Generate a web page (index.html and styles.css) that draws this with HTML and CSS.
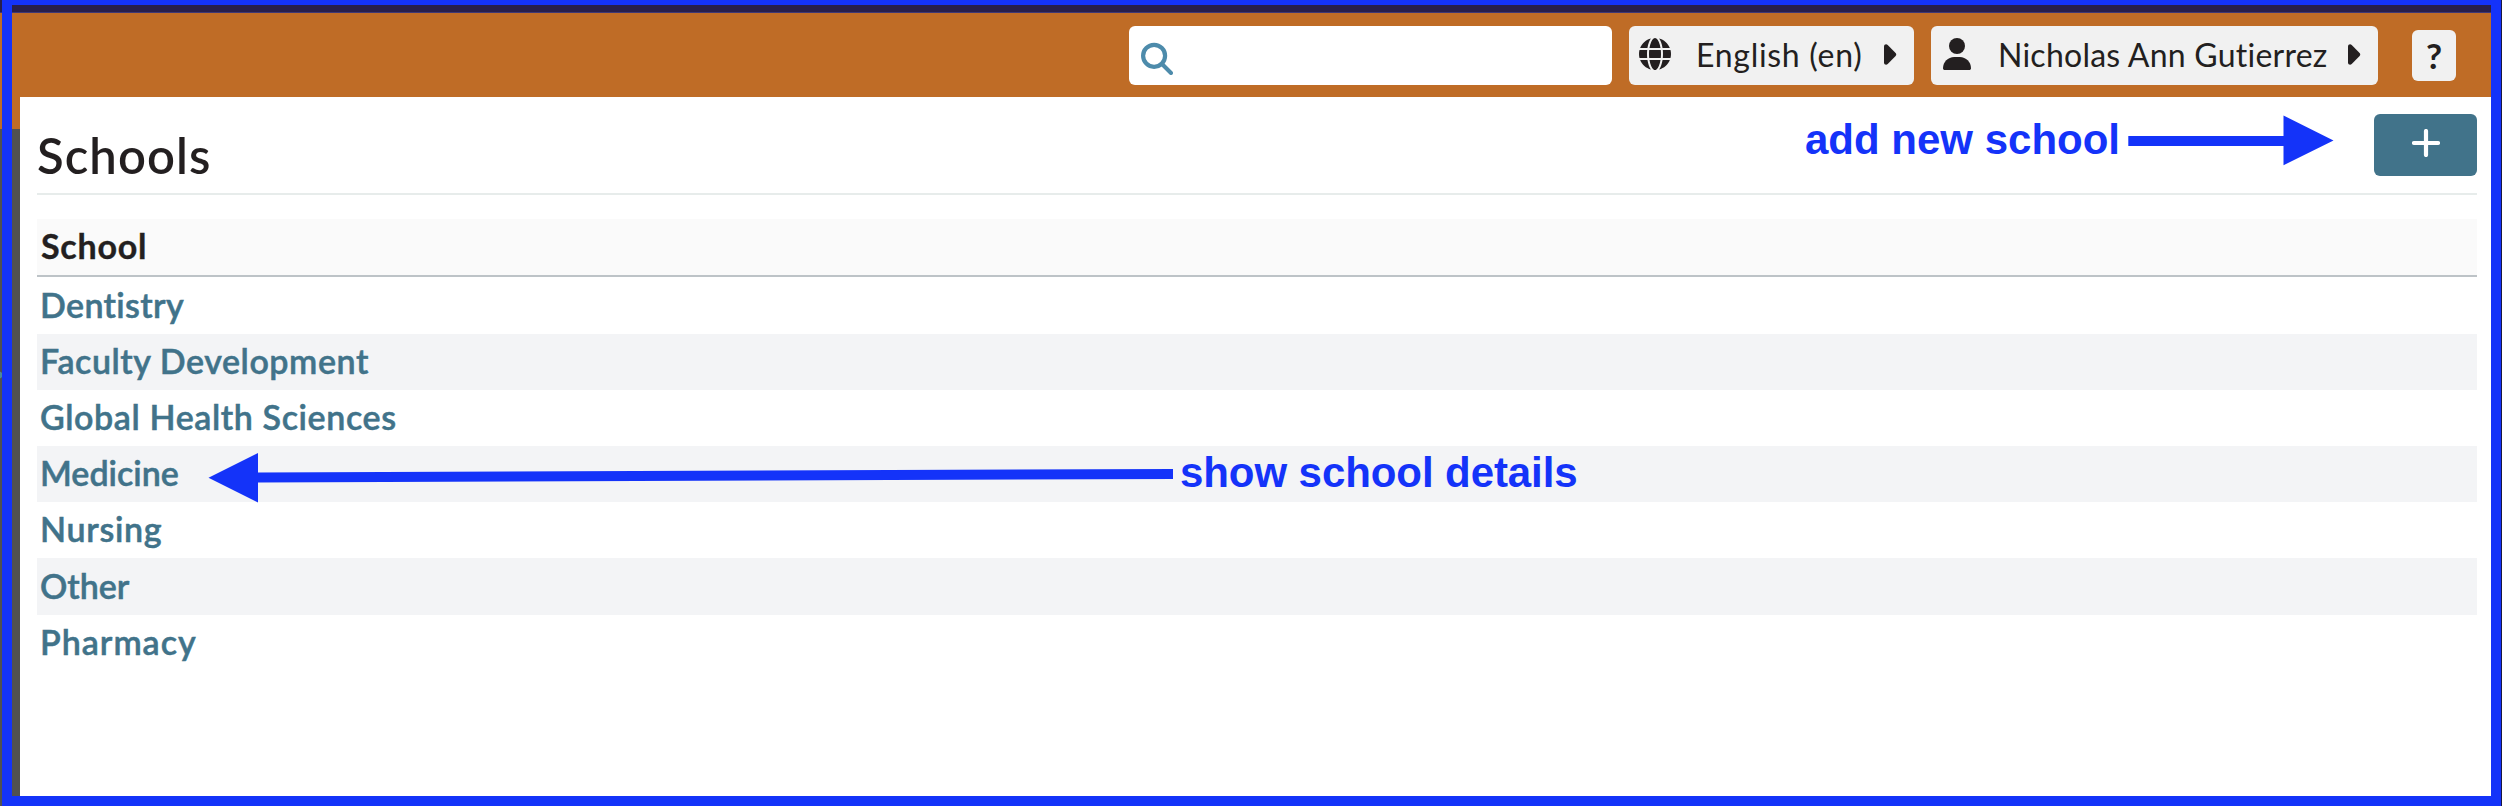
FILE: index.html
```html
<!DOCTYPE html>
<html lang="en">
<head>
<meta charset="utf-8">
<title>Schools</title>
<link rel="stylesheet" href="styles.css">
</head>
<body>
<div class="app">
  <div class="top-strip"></div>
  <header class="header">
    <div class="search">
      <svg class="search-icon" width="32" height="33" viewBox="0 0 32 33"><circle cx="13.1" cy="13.8" r="11" fill="none" stroke="#4d8bab" stroke-width="4.200"/><path d="M21 22 30 31" stroke="#4d8bab" stroke-width="4" stroke-linecap="round"/></svg>
    </div>
    <button class="menu language">
      <svg class="globe" width="32" height="32" viewBox="0 0 512 512" fill="#231f20"><path d="M352 256c0 22.200-1.200 43.600-3.300 64H163.300c-2.200-20.400-3.300-41.800-3.300-64s1.200-43.600 3.300-64h185.400c2.200 20.400 3.300 41.800 3.300 64zm28.800-64h123.100c5.300 20.500 8.100 41.900 8.100 64s-2.800 43.500-8.100 64H380.800c2.100-20.600 3.200-42 3.200-64s-1.100-43.400-3.200-64zm112.600-32H376.700c-10-63.900-29.800-117.400-55.300-151.600 78.300 20.700 142 77.500 172 151.600zm-149.100 0H167.700c6.100-36.400 15.500-68.600 27-94.700 10.500-23.600 22.200-40.700 33.500-51.500C239.400 3.200 248.700 0 256 0s16.600 3.200 27.800 13.800c11.300 10.800 23 27.900 33.500 51.500 11.600 26 20.900 58.200 27 94.700zm-209 0H18.600C48.600 85.900 112.200 29.100 190.600 8.400 165.100 42.600 145.300 96.100 135.300 160zM8.100 192h123.100c-2.100 20.600-3.200 42-3.200 64s1.100 43.400 3.200 64H8.100C2.800 299.500 0 278.100 0 256s2.800-43.500 8.100-64zm186.600 254.600c-11.600-26-20.900-58.200-27-94.600h176.600c-6.100 36.400-15.500 68.600-27 94.600-10.500 23.600-22.200 40.700-33.500 51.500C272.600 508.800 263.300 512 256 512s-16.600-3.200-27.800-13.800c-11.300-10.800-23-27.900-33.500-51.600zM135.300 352c10 63.900 29.800 117.400 55.300 151.600C112.200 482.900 48.600 426.100 18.600 352h116.700zm358.100 0c-30 74.100-93.600 130.900-171.900 151.600 25.500-34.200 45.200-87.700 55.300-151.600h116.600z"/></svg>
      <span class="menu-text language-text">English (en)</span>
      <svg class="caret" width="13" height="21" viewBox="0 0 13 21"><path d="M0 2.500C0 .4 2.200-.5 3.700.9L11.600 9q1.300 1.500 0 3L3.700 20C2.200 21.400 0 20.500 0 18.400Z" fill="#231f20"/></svg>
    </button>
    <button class="menu user">
      <svg class="person" width="28" height="32" viewBox="0 0 28 32" fill="#231f20"><circle cx="14" cy="8" r="8"/><path d="M11.200 19h5.700C23 19 28 24 28 30.200c0 1-.8 1.800-1.800 1.800H1.800C.8 32 0 31.200 0 30.200 0 24 5 19 11.200 19Z"/></svg>
      <span class="menu-text user-text">Nicholas Ann Gutierrez</span>
      <svg class="caret" width="13" height="21" viewBox="0 0 13 21"><path d="M0 2.500C0 .4 2.200-.5 3.700.9L11.600 9q1.300 1.500 0 3L3.700 20C2.200 21.400 0 20.500 0 18.400Z" fill="#231f20"/></svg>
    </button>
    <button class="help">?</button>
  </header>
  <div class="body">
    <aside class="sidebar"></aside>
    <main class="content">
      <div class="title-row">
        <h1 class="title">Schools</h1>
        <button class="add" aria-label="Add"><svg width="28" height="28" viewBox="0 0 28 28"><path d="M14 2V26M2 14H26" stroke="#fff" stroke-width="4.200" stroke-linecap="round"/></svg></button>
      </div>
      <div class="list">
        <div class="list-head">School</div>
        <a class="row first"><span class="w-dentistry">Dentistry</span></a>
        <a class="row"><span class="w-faculty">Faculty Development</span></a>
        <a class="row"><span class="w-global">Global Health Sciences</span></a>
        <a class="row"><span class="w-medicine">Medicine</span></a>
        <a class="row"><span class="w-nursing">Nursing</span></a>
        <a class="row tall"><span class="w-other">Other</span></a>
        <a class="row"><span class="w-pharmacy">Pharmacy</span></a>
      </div>
    </main>
  </div>
  <div class="frame"></div>
  <svg class="arrows" width="2502" height="806" viewBox="0 0 2502 806" fill="#1433f9">
    <path d="M2128.300 136H2283.500V115.500L2333.500 140.500 2283.500 165.300V146H2128.300Z"/>
    <path d="M1173 469V479L258 482.400V502.500L208.500 477.800 258 453V472.400Z"/>
  </svg>
  <div class="note note-add">add new school</div>
  <div class="note note-details">show school details</div>
</div>
</body>
</html>
```
FILE: styles.css
```css
* { box-sizing: border-box; }
body { margin: 0; font-family: Lato, "Liberation Sans", sans-serif; font-variant-ligatures: none; color: #231f20; }
button { border: 0; margin: 0; padding: 0; font: inherit; color: inherit; }
svg { display: block; flex: none; }

.app { position: relative; width: 2502px; height: 806px; overflow: hidden; display: flex; flex-direction: column; background: #fff; }
.top-strip { flex: none; height: 13px; background: #281f4b; border-bottom: 1px solid #3f3875; }
.header { flex: none; height: 84px; padding: 13px 46px 0 0; background: #bf6c26; display: flex; justify-content: flex-end; align-items: flex-start; }
.search { width: 483px; height: 59px; margin-right: 17px; padding: 16px 0 0 12px; background: #fff; border-radius: 6px; }
.menu { height: 59px; padding-bottom: 3px; background: #f1f1f1; border-radius: 6px; display: flex; align-items: center; font-size: 32px; white-space: nowrap; text-align: left; }
.language { width: 285px; margin-right: 17px; padding-left: 10px; }
.user { width: 447px; margin-right: 34px; padding-left: 12px; }
.menu-text { padding-top: 2px; line-height: 38px; }
.language-text { width: 189px; padding-left: 25px; letter-spacing: .7px; }
.user-text { width: 377px; padding-left: 27px; letter-spacing: .25px; }
.language .caret { margin-left: 24px; }
.help { width: 44px; height: 51px; margin-top: 4px; padding-bottom: 2px; background: #f1f1f1; border-radius: 6px; font-size: 35px; font-weight: 700; }

.body { flex: 1; display: flex; }
.sidebar { width: 20px; background: radial-gradient(circle at -1px 278px, #4d8b96 3px, transparent 4px), linear-gradient(#bf6c26 32px, #515151 32px); }
.content { flex: 1; padding: 0 25px 0 17px; }
.title-row { height: 98px; border-bottom: 2px solid #e7eceb; display: flex; justify-content: space-between; align-items: flex-start; }
.title { margin: 29px 0 0; font-size: 49px; line-height: 58px; font-weight: 600; letter-spacing: 1.1px; }
.add { width: 103px; height: 62px; margin-top: 17px; padding-bottom: 4px; border-radius: 6px; background: #41738a; display: flex; align-items: center; justify-content: center; }

.list { margin-top: 24px; font-size: 34px; }
.list-head { height: 58px; padding-left: 4px; line-height: 53px; font-weight: 700; letter-spacing: .75px; background: #fafafa; border-bottom: 2px solid #bdc3c7; -webkit-text-stroke: .4px; }
.row { display: block; height: 56px; padding-left: 3px; line-height: 53px; font-weight: 600; color: #41738a; -webkit-text-stroke: .5px; }
.row.first { height: 57px; padding-top: 1px; }
.row.tall { height: 57px; padding-top: 1px; }
.row:nth-child(odd) { background: #f3f4f6; }
.w-dentistry { letter-spacing: .35px; }
.w-faculty { letter-spacing: .55px; }
.w-global { letter-spacing: .6px; }
.w-medicine { letter-spacing: 0; }
.w-nursing { letter-spacing: .7px; }
.w-other { letter-spacing: 0; }
.w-pharmacy { letter-spacing: 1px; }

/* Annotations drawn over the page */
.frame { position: absolute; left: 2px; top: -5px; width: 2499px; height: 811px; border: 10px solid #1433f9; box-shadow: 1px 0 #1b1740; }
.arrows { position: absolute; left: 0; top: 0; }
.note { position: absolute; font: 700 42px/48px "Liberation Sans", Arial, sans-serif; color: #1433f9; white-space: nowrap; }
.note-add { left: 1805px; top: 116px; }
.note-details { left: 1180px; top: 449px; letter-spacing: -.08px; }
```
